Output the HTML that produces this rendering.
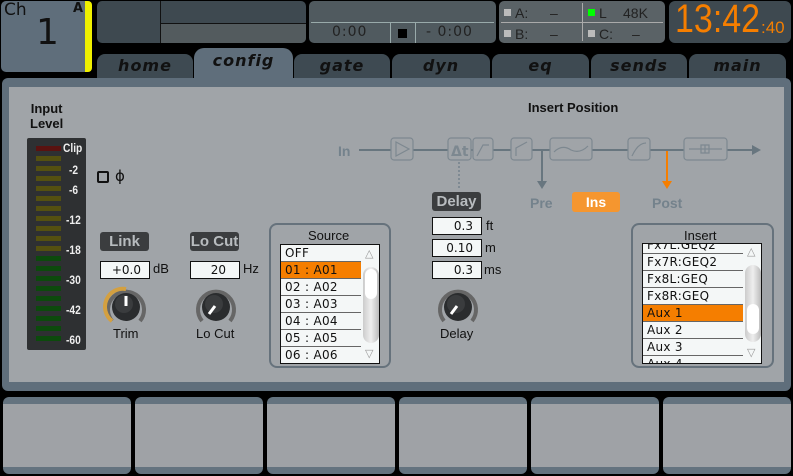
<!DOCTYPE html>
<html><head><meta charset="utf-8"><style>
*{margin:0;padding:0;box-sizing:border-box}
body{width:793px;height:476px;background:#000;position:relative;overflow:hidden;font-family:"DejaVu Sans","Liberation Sans",sans-serif}
.a{position:absolute}
.tab{position:absolute;top:54px;height:26px;background:#3e4a52;border-radius:8px 8px 0 0;text-align:center;font:italic bold 16px "DejaVu Sans",sans-serif;color:#111;line-height:24px;letter-spacing:1px}
.b{font-family:"Liberation Sans",sans-serif;font-weight:bold}
.lbl{font:13px "Liberation Sans",sans-serif;color:#111}
.inp{position:absolute;background:#f4f7f7;border:1px solid #111;font:12px "DejaVu Sans",sans-serif;text-align:right;padding-right:8px;line-height:16px;color:#111}
.btnd{position:absolute;background:#3b3d3f;color:#b8bcbf;border-radius:3px;font:bold 15px "Liberation Sans",sans-serif;text-align:center;line-height:19px}
.list{position:absolute;background:#f4f7f7;border:1px solid #111;overflow:hidden}
.row{height:17px;border-bottom:1px solid #666;font:12px "DejaVu Sans",sans-serif;line-height:16px;padding-left:4px;color:#111;width:80px;letter-spacing:.3px}
.sel{background:#f57e00}
.fb{position:absolute;width:128px;height:77px;top:397px;border-radius:6px;background:#9fa2a6;border-top:7px solid #64737f;border-bottom:7px solid #64737f}
.seg{position:absolute;left:36px;width:25px;height:5px}
.ml{position:absolute;font:bold 12px "Liberation Sans",sans-serif;color:#eee;transform:scaleX(.85);transform-origin:left}
.st{position:absolute;font:14px "Liberation Sans",sans-serif;color:#222}
</style></head><body>
<!-- Ch box -->
<div class="a" style="left:1px;top:1px;width:84px;height:71px;background:#5f6e7b;border-radius:5px 0 0 5px"></div>
<div class="a" style="left:85px;top:1px;width:7px;height:71px;background:#f0f000;border-radius:0 4px 4px 0"></div>
<div class="a" style="left:4px;top:0;font:17px 'DejaVu Sans',sans-serif;color:#111">Ch</div>
<div class="a" style="left:73px;top:1px;font:bold 13px 'DejaVu Sans',sans-serif;color:#111">A</div>
<div class="a" style="left:36px;top:12px;font:36px 'DejaVu Sans',sans-serif;color:#111">1</div>
<!-- top box1 -->
<div class="a" style="left:97px;top:1px;width:209px;height:42px;background:#3e4950;border-radius:5px;overflow:hidden">
 <div class="a" style="left:63px;top:0;width:1px;height:42px;background:#111"></div>
 <div class="a" style="left:64px;top:22px;width:145px;height:1px;background:#111"></div>
 <div class="a" style="left:64px;top:23px;width:145px;height:19px;background:#535b5e"></div>
</div>
<!-- top box2 -->
<div class="a" style="left:309px;top:1px;width:187px;height:42px;background:#505a5f;border-radius:5px;overflow:hidden">
 <div class="a" style="left:2px;top:21px;width:183px;height:1px;background:#9aa"></div>
 <div class="a" style="left:81px;top:22px;width:1px;height:20px;background:#9aa"></div>
 <div class="a" style="left:23px;top:23px;font:14px 'DejaVu Sans',sans-serif;color:#222;letter-spacing:1px">0:00</div>
 <div class="a" style="left:89px;top:28px;width:9px;height:9px;background:#000"></div>
 <div class="a" style="left:106px;top:22px;width:1px;height:20px;background:#9aa"></div>
 <div class="a" style="left:117px;top:23px;font:14px 'DejaVu Sans',sans-serif;color:#222;letter-spacing:1px">- 0:00</div>
</div>
<!-- status -->
<div class="a" style="left:499px;top:1px;width:166px;height:42px;background:#5a6266;border-radius:5px;overflow:hidden">
 <div class="a" style="left:2px;top:21px;width:162px;height:1px;background:#aaa"></div>
 <div class="a" style="left:83px;top:2px;width:1px;height:38px;background:#aaa"></div>
 <div class="a" style="left:5px;top:8px;width:7px;height:7px;background:#bbb"></div>
 <div class="st" style="left:16px;top:4px">A:</div><div class="st" style="left:51px;top:4px">–</div>
 <div class="a" style="left:5px;top:29px;width:7px;height:7px;background:#bbb"></div>
 <div class="st" style="left:16px;top:25px">B:</div><div class="st" style="left:51px;top:25px">–</div>
 <div class="a" style="left:89px;top:8px;width:7px;height:7px;background:#0f0"></div>
 <div class="st" style="left:100px;top:4px">L</div><div class="st" style="left:124px;top:4px">48K</div>
 <div class="a" style="left:89px;top:29px;width:7px;height:7px;background:#bbb"></div>
 <div class="st" style="left:100px;top:25px">C:</div><div class="st" style="left:133px;top:25px">–</div>
</div>
<!-- clock -->
<div class="a" style="left:669px;top:1px;width:122px;height:42px;background:#3e4950;border-radius:6px"></div>
<div class="a" style="left:675px;top:-3px;font:40px 'Liberation Sans',sans-serif;color:#f57e00;transform:scaleX(.85);transform-origin:left;white-space:nowrap">13:42</div>
<div class="a" style="left:761px;top:18px;font:17px 'Liberation Sans',sans-serif;color:#f57e00">:40</div>
<!-- tabs -->
<div class="tab" style="left:97px;width:96px">home</div>
<div class="tab" style="left:194px;top:48px;height:32px;width:99px;background:#5f6e7b;border-radius:10px 10px 0 0;line-height:26px">config</div>
<div class="tab" style="left:294px;width:96px">gate</div>
<div class="tab" style="left:392px;width:98px">dyn</div>
<div class="tab" style="left:492px;width:97px">eq</div>
<div class="tab" style="left:591px;width:96px">sends</div>
<div class="tab" style="left:689px;width:97px">main</div>
<!-- panel -->
<div class="a" style="left:2px;top:78px;width:789px;height:313px;background:#5f6e7b;border-radius:6px"></div>
<div class="a" style="left:9px;top:87px;width:775px;height:295px;background:#a0a4a8"></div>
<div class="a b" style="left:30px;top:101px;font-size:13px;color:#111;text-align:center;line-height:15px">Input<br>Level</div>
<div class="a b" style="left:528px;top:100px;font-size:13px;color:#111">Insert Position</div>
<!-- meter -->
<div class="a" style="left:27px;top:138px;width:59px;height:212px;background:#2e3032;border-radius:2px"></div>
<div class="seg" style="top:146px;background:#5a1210"></div>
<div class="seg" style="top:156px;background:#545010"></div><div class="seg" style="top:166px;background:#545010"></div><div class="seg" style="top:176px;background:#545010"></div><div class="seg" style="top:186px;background:#545010"></div><div class="seg" style="top:196px;background:#545010"></div><div class="seg" style="top:206px;background:#545010"></div><div class="seg" style="top:216px;background:#545010"></div><div class="seg" style="top:226px;background:#545010"></div><div class="seg" style="top:236px;background:#545010"></div><div class="seg" style="top:246px;background:#545010"></div>
<div class="seg" style="top:256px;background:#0c4a0c"></div><div class="seg" style="top:266px;background:#0c4a0c"></div><div class="seg" style="top:276px;background:#0c4a0c"></div><div class="seg" style="top:286px;background:#0c4a0c"></div><div class="seg" style="top:296px;background:#0c4a0c"></div><div class="seg" style="top:306px;background:#0c4a0c"></div><div class="seg" style="top:316px;background:#0c4a0c"></div><div class="seg" style="top:326px;background:#0c4a0c"></div><div class="seg" style="top:336px;background:#0c4a0c"></div>
<div class="ml" style="left:63px;top:141px">Clip</div>
<div class="ml" style="left:69px;top:163px">-2</div>
<div class="ml" style="left:69px;top:183px">-6</div>
<div class="ml" style="left:66px;top:213px">-12</div>
<div class="ml" style="left:66px;top:243px">-18</div>
<div class="ml" style="left:66px;top:273px">-30</div>
<div class="ml" style="left:66px;top:303px">-42</div>
<div class="ml" style="left:66px;top:333px">-60</div>
<div class="a" style="left:97px;top:171px;width:12px;height:12px;border:2px solid #111;border-radius:2px"></div>
<div class="a" style="left:115px;top:167px;font:15px 'DejaVu Sans',sans-serif;color:#111">ϕ</div>
<!-- Link / trim -->
<div class="btnd" style="left:100px;top:232px;width:49px">Link</div>
<div class="inp" style="left:100px;top:261px;width:50px">+0.0</div>
<div class="a lbl" style="left:153px;top:261px">dB</div>
<svg class="a" style="left:103px;top:284px" width="46" height="46" viewBox="0 0 46 46">
<path d="M9 37 A18 18 0 1 1 37 37" fill="none" stroke="#666" stroke-width="4"/>
<path d="M9 37 A18 18 0 0 1 23 5" fill="none" stroke="#d4a040" stroke-width="4"/>
<circle cx="23" cy="23" r="14" fill="#2a2c2e"/><circle cx="21" cy="20" r="9" fill="#3a3c3e"/>
<line x1="23" y1="12" x2="23" y2="22" stroke="#fff" stroke-width="3"/></svg>
<div class="a lbl" style="left:113px;top:326px">Trim</div>
<!-- Lo cut -->
<div class="btnd" style="left:190px;top:232px;width:49px">Lo Cut</div>
<div class="inp" style="left:190px;top:261px;width:50px;padding-right:13px">20</div>
<div class="a lbl" style="left:243px;top:261px">Hz</div>
<svg class="a" style="left:193px;top:284px" width="46" height="46" viewBox="0 0 46 46">
<path d="M9 37 A18 18 0 1 1 37 37" fill="none" stroke="#666" stroke-width="4"/>
<circle cx="23" cy="23" r="14" fill="#2a2c2e"/><circle cx="21" cy="20" r="9" fill="#3a3c3e"/>
<line x1="16" y1="30" x2="22" y2="22" stroke="#fff" stroke-width="3"/></svg>
<div class="a lbl" style="left:196px;top:326px">Lo Cut</div>
<!-- Source -->
<div class="a" style="left:269px;top:223px;width:122px;height:145px;border:2px solid #66727c;border-radius:8px"></div>
<div class="a lbl" style="left:308px;top:228px">Source</div>
<div class="list" style="left:280px;top:244px;width:100px;height:120px">
 <div class="row">OFF</div><div class="row sel">01 : A01</div><div class="row">02 : A02</div><div class="row">03 : A03</div><div class="row">04 : A04</div><div class="row">05 : A05</div><div class="row">06 : A06</div>
 <div class="a" style="left:82px;top:22px;width:16px;height:76px;border-radius:8px;background:linear-gradient(90deg,#ccc,#eee,#bbb)"></div>
 <div class="a" style="left:84px;top:24px;width:12px;height:30px;border-radius:6px;background:#fff"></div>
 <div class="a" style="left:84px;top:2px;color:#999;font-size:11px">△</div>
 <div class="a" style="left:84px;top:102px;color:#999;font-size:11px">▽</div>
</div>
<!-- signal chain -->
<svg class="a" style="left:330px;top:130px" width="440" height="60" viewBox="330 130 440 60">
<g stroke="#68767f" stroke-width="2" fill="none">
<line x1="359" y1="150" x2="752" y2="150"/>
<line x1="542" y1="150" x2="542" y2="182"/>
</g>
<polygon points="752,145 761,150 752,155" fill="#68767f"/>
<polygon points="537,181 547,181 542,189" fill="#68767f"/>
<g stroke="#7d8890" stroke-width="1.2" fill="#a0a4a8">
<rect x="391" y="138" width="22" height="22" rx="3"/><rect x="448" y="138" width="23" height="22" rx="3"/><rect x="473" y="138" width="20" height="22" rx="3"/><rect x="511" y="138" width="21" height="22" rx="3"/><rect x="550" y="138" width="42" height="22" rx="3"/><rect x="628" y="138" width="22" height="22" rx="3"/><rect x="684" y="138" width="43" height="22" rx="3"/>
<path d="M396 142 L409 149 L396 156 Z" fill="none"/>
<path d="M477 156 L483 145 L489 145" fill="none"/>
<path d="M516 156 L516 148 L527 142" fill="none"/>
<path d="M554 152 Q562 144 571 150 Q580 154 588 146" fill="none"/>
<path d="M632 156 Q638 143 646 143" fill="none"/>
<path d="M689 149 L722 149 M701 145 h8 v8 h-8 z M705 145 v8" fill="none"/>
</g>
<text x="451" y="156" font-family="DejaVu Sans" font-size="14" font-weight="bold" fill="#7d8890">Δt</text>
<text x="338" y="156" font-family="Liberation Sans" font-size="14" font-weight="bold" fill="#74828c">In</text>
<line x1="459" y1="162" x2="459" y2="190" stroke="#74828c" stroke-width="1.5" stroke-dasharray="2 2"/>
<line x1="667" y1="151" x2="667" y2="182" stroke="#f57e00" stroke-width="2"/>
<polygon points="662,181 672,181 667,189" fill="#f57e00"/>
</svg>
<div class="a b" style="left:530px;top:195px;font-size:14px;color:#74828c">Pre</div>
<div class="a b" style="left:572px;top:192px;width:48px;height:20px;background:#f5962f;border-radius:3px;color:#fff;font-size:14px;text-align:center;line-height:20px">Ins</div>
<div class="a b" style="left:652px;top:195px;font-size:14px;color:#74828c">Post</div>
<!-- delay -->
<div class="btnd" style="left:432px;top:192px;width:49px">Delay</div>
<div class="inp" style="left:432px;top:217px;width:50px">0.3</div><div class="a lbl" style="left:486px;top:218px">ft</div>
<div class="inp" style="left:432px;top:239px;width:50px">0.10</div><div class="a lbl" style="left:485px;top:240px">m</div>
<div class="inp" style="left:432px;top:261px;width:50px">0.3</div><div class="a lbl" style="left:484px;top:262px">ms</div>
<svg class="a" style="left:435px;top:284px" width="46" height="46" viewBox="0 0 46 46">
<path d="M9 37 A18 18 0 1 1 37 37" fill="none" stroke="#666" stroke-width="4"/>
<circle cx="23" cy="23" r="14" fill="#2a2c2e"/><circle cx="21" cy="20" r="9" fill="#3a3c3e"/>
<line x1="16" y1="30" x2="22" y2="22" stroke="#fff" stroke-width="3"/></svg>
<div class="a lbl" style="left:440px;top:326px">Delay</div>
<!-- Insert -->
<div class="a" style="left:631px;top:223px;width:143px;height:145px;border:2px solid #66727c;border-radius:8px"></div>
<div class="a lbl" style="left:684px;top:228px">Insert</div>
<div class="list" style="left:642px;top:243px;width:120px;height:121px">
 <div style="margin-top:-7px"></div>
 <div class="row" style="width:100px">Fx7L:GEQ2</div><div class="row" style="width:100px">Fx7R:GEQ2</div><div class="row" style="width:100px">Fx8L:GEQ</div><div class="row" style="width:100px">Fx8R:GEQ</div><div class="row sel" style="width:100px">Aux 1</div><div class="row" style="width:100px">Aux 2</div><div class="row" style="width:100px">Aux 3</div><div class="row" style="width:100px">Aux 4</div>
 <div class="a" style="left:102px;top:21px;width:16px;height:77px;border-radius:8px;background:linear-gradient(90deg,#ccc,#eee,#bbb)"></div>
 <div class="a" style="left:104px;top:60px;width:12px;height:30px;border-radius:6px;background:#fff"></div>
 <div class="a" style="left:104px;top:1px;color:#999;font-size:11px">△</div>
 <div class="a" style="left:104px;top:102px;color:#999;font-size:11px">▽</div>
</div>
<!-- bottom -->
<div class="fb" style="left:3px"></div><div class="fb" style="left:135px"></div><div class="fb" style="left:267px"></div><div class="fb" style="left:399px"></div><div class="fb" style="left:531px"></div><div class="fb" style="left:663px"></div>
</body></html>
